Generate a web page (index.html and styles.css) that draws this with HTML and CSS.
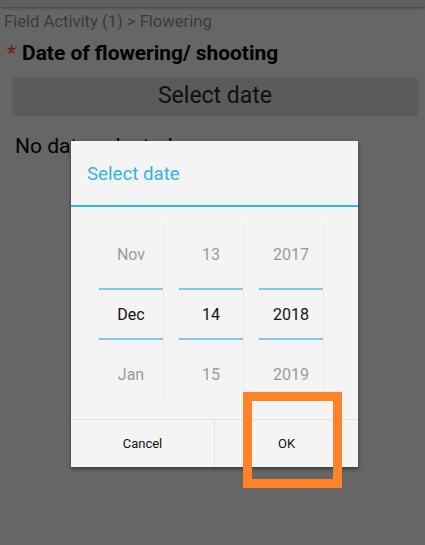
FILE: index.html
```html
<!DOCTYPE html>
<html>
<head>
<meta charset="utf-8">
<link rel="stylesheet" href="styles.css">
</head>
<body>
<div class="page">
  <div class="topbar"></div>
  <div class="crumb">Field Activity (1) &gt; Flowering</div>
  <div class="label"><span class="req">*</span><span class="label-text">Date of flowering/ shooting</span></div>
  <div class="btn">Select date</div>
  <div class="nodate">No date selected</div>
</div>

<div class="dialog">
  <div class="dlg-title">Select date</div>
  <div class="dlg-rule"></div>
  <div class="pickers">
    <div class="col">
      <div class="cell dim">Nov</div>
      <div class="cell sel">Dec</div>
      <div class="cell dim">Jan</div>
    </div>
    <div class="col">
      <div class="cell dim">13</div>
      <div class="cell sel">14</div>
      <div class="cell dim">15</div>
    </div>
    <div class="col">
      <div class="cell dim">2017</div>
      <div class="cell sel">2018</div>
      <div class="cell dim">2019</div>
    </div>
  </div>
  <div class="actions">
    <div class="action">Cancel</div>
    <div class="action">OK</div>
  </div>
</div>

<div class="highlight"></div>
</body>
</html>
```

FILE: styles.css
```css
html, body {
  margin: 0;
  padding: 0;
}
body {
  width: 425px;
  height: 545px;
  background: #666666;
  font-family: Roboto, "Liberation Sans", sans-serif;
  overflow: hidden;
  position: relative;
}
.page {
  display: flex;
  flex-direction: column;
}
.topbar {
  height: 7px;
  background: #5f5f5f;
  box-shadow: 0 1px 3px rgba(0,0,0,0.35);
}
.crumb {
  margin: 5px 0 0 4px;
  font-size: 16.6px;
  line-height: 19px;
  color: #3b3b3b;
}
.label {
  margin: 10px 0 0 7px;
  display: flex;
  align-items: baseline;
  gap: 6px;
}
.req {
  color: #7a1a14;
  font-size: 20px;
  font-weight: bold;
}
.label-text {
  font-size: 20.9px;
  font-weight: bold;
  color: #000;
  line-height: 24px;
}
.btn {
  margin: 12px 8px 0 13px;
  height: 37px;
  background: #5b5b5b;
  border-radius: 2px;
  box-shadow: 0 1px 2px rgba(0,0,0,0.25);
  display: flex;
  align-items: center;
  justify-content: center;
  font-size: 23px;
  color: #101010;
}
.nodate {
  margin: 20px 0 0 15px;
  font-size: 21px;
  color: #000;
}

.dialog {
  position: absolute;
  left: 71px;
  top: 141px;
  width: 287px;
  height: 326px;
  background: #f4f4f4;
  box-shadow: 0 2px 4px rgba(0,0,0,0.45);
  display: flex;
  flex-direction: column;
}
.dlg-title {
  height: 64px;
  display: flex;
  align-items: center;
  padding: 2px 0 0 16px;
  box-sizing: border-box;
  font-size: 18.7px;
  color: #33b3e3;
}
.dlg-rule {
  height: 2px;
  background: #33b5e5;
}
.pickers {
  display: flex;
  gap: 16px;
  padding: 15px 0 0 28px;
  height: 197px;
  box-sizing: border-box;
}
.col {
  width: 64px;
  height: 182px;
  display: flex;
  flex-direction: column;
  box-shadow: 1px 0 0 #ebebeb;
  padding-top: 2px;
  box-sizing: border-box;
}
.cell {
  height: 60px;
  display: flex;
  align-items: center;
  justify-content: center;
  font-size: 16px;
}
.dim {
  color: #9a9a9a;
}
.sel {
  color: #111;
  background:
    linear-gradient(#7ccbeb, #7ccbeb) top 4px left 0 / 100% 2px no-repeat,
    linear-gradient(#7ccbeb, #7ccbeb) bottom 4px left 0 / 100% 2px no-repeat;
}
.actions {
  margin-top: auto;
  height: 47px;
  border-top: 1px solid #e2e2e2;
  display: flex;
}
.action {
  flex: 1;
  display: flex;
  align-items: center;
  justify-content: center;
  font-size: 13px;
  color: #111;
}
.action + .action {
  border-left: 1px solid #e2e2e2;
}

.highlight {
  position: absolute;
  left: 243px;
  top: 392px;
  width: 99px;
  height: 96px;
  box-sizing: border-box;
  border: 9px solid #fe8228;
}
```
